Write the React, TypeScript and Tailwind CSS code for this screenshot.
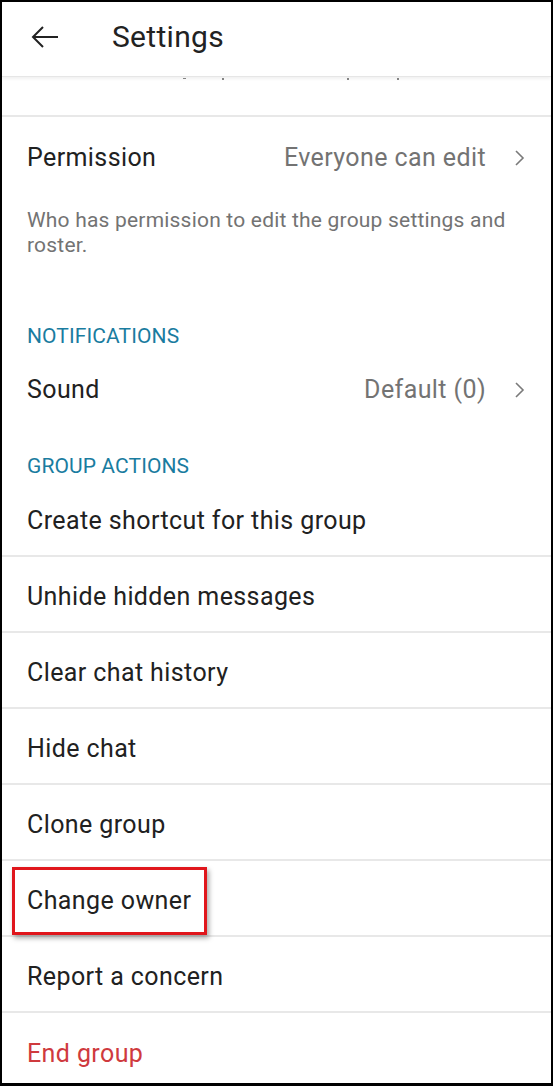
import React from "react";

const font = { fontFamily: "Roboto, 'Noto Sans', sans-serif" };

function Chevron() {
  return (
    <svg width="14" height="18" viewBox="0 0 14 18" className="ml-[26px] mr-[0px]">
      <polyline points="4,2 11,9 4,16" fill="none" stroke="#7a7a7a" strokeWidth="1.6" />
    </svg>
  );
}

const actions = [
  "Create shortcut for this group",
  "Unhide hidden messages",
  "Clear chat history",
  "Hide chat",
  "Clone group",
  "Change owner",
  "Report a concern",
];

export default function App() {
  return (
    <div
      className="w-[553px] h-[1086px] bg-white border-black border-l-2 border-t-2 border-r-2 border-b-[3px] overflow-hidden flex flex-col text-[#212121]"
      style={font}
    >
      {/* Header */}
      <div className="h-[75px] shrink-0 flex items-center pb-[5px] border-b border-[#e6e6e6] shadow-[0_2px_3px_rgba(0,0,0,0.06)] z-10">
        <svg width="28" height="24" viewBox="0 0 28 24" className="ml-[29px]">
          <path d="M27 12H2M12 2L2 12l10 10" fill="none" stroke="#222" strokeWidth="2" />
        </svg>
        <span className="ml-[53px] text-[30px] tracking-[0.3px] leading-none text-[#222]">Settings</span>
      </div>

      {/* cut off row */}
      <div className="h-[40px] shrink-0 border-b-2 border-[#e8e8e8] flex items-start pt-[1px]">
        <span className="ml-[181px] w-[3px] h-[1px] bg-[#888]" />
        <span className="ml-[36px] w-[2px] h-[2px] bg-[#888]" />
        <span className="ml-[123px] w-[2px] h-[2px] bg-[#888]" />
        <span className="ml-[48px] w-[2px] h-[2px] bg-[#888]" />
      </div>

      {/* Permission */}
      <div className="h-[80px] shrink-0 flex items-center pl-[25px] pr-[25px] pt-[2px]">
        <span className="text-[25px] tracking-[0.4px] flex-1">Permission</span>
        <span className="text-[25px] tracking-[0.4px] text-[#737373]">Everyone can edit</span>
        <Chevron />
      </div>
      <div className="pl-[25px] pr-[30px] pt-[11px] text-[21px] tracking-[0.2px] leading-[25px] text-[#737373] h-[127px] shrink-0">
        Who has permission to edit the group settings and roster.
      </div>

      {/* Notifications */}
      <div className="pl-[25px] text-[21px] tracking-[0.1px] leading-[24px] text-[#1a7ca0] h-[24px] shrink-0">NOTIFICATIONS</div>
      <div className="h-[78px] shrink-0 flex items-center pl-[25px] pr-[25px] pt-[5px]">
        <span className="text-[25px] tracking-[0.4px] flex-1">Sound</span>
        <span className="text-[25px] tracking-[0.4px] text-[#737373]">Default (0)</span>
        <Chevron />
      </div>

      {/* Group actions */}
      <div className="pl-[25px] pt-[28px] pb-[3px] text-[21px] tracking-[0.1px] leading-[24px] text-[#1a7ca0] h-[55px] shrink-0">GROUP ACTIONS</div>
      {actions.map((a) => (
        <div key={a} className="h-[76px] shrink-0 flex items-center pl-[25px] pt-[5px] border-b-2 border-[#e8e8e8]">
          {a === "Change owner" ? (
            <div className="-ml-[15px] h-[68px] flex items-center border-[3px] border-[#e0161c] pl-[12px] pr-[13px] shadow-[2px_3px_5px_rgba(0,0,0,0.35)]">
              <span className="text-[25px] tracking-[0.4px]">{a}</span>
            </div>
          ) : (
            <span className="text-[25px] tracking-[0.4px]">{a}</span>
          )}
        </div>
      ))}
      <div className="h-[76px] shrink-0 flex items-center pl-[25px] pt-[5px]">
        <span className="text-[25px] tracking-[0.4px] text-[#cf3a3e]">End group</span>
      </div>
    </div>
  );
}
